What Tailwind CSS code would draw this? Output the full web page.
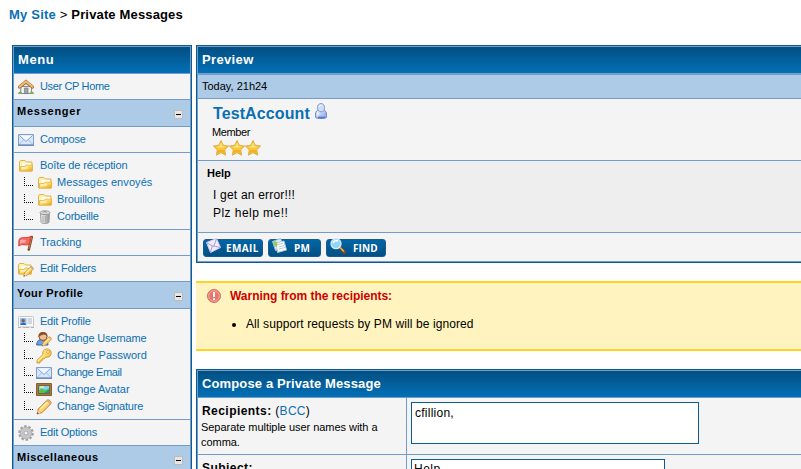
<!DOCTYPE html>
<html lang="en">
<head>
<meta charset="utf-8">
<title>Private Messages</title>
<script src="https://cdn.jsdelivr.net/npm/@tailwindcss/browser@4"></script>
</head>
<body class="h-[469px] w-[801px] overflow-hidden bg-white font-['Liberation_Sans',Arial,sans-serif] text-[11px] text-black">
<svg class="absolute size-0">
  <defs>
    <linearGradient id="gold" x1="0" y1="0" x2="1" y2="1"><stop offset="0" stop-color="#fff3b0"/><stop offset=".5" stop-color="#ffd964"/><stop offset="1" stop-color="#e8a317"/></linearGradient>
    <linearGradient id="grey" x1="0" y1="0" x2="1" y2="0"><stop offset="0" stop-color="#eee"/><stop offset=".5" stop-color="#ccc"/><stop offset="1" stop-color="#8c8c8c"/></linearGradient>
    <linearGradient id="bluey" x1="0" y1="0" x2="1" y2="1"><stop offset="0" stop-color="#f4f8ff"/><stop offset="1" stop-color="#7f9fe8"/></linearGradient>
  </defs>
  <symbol id="home" viewBox="0 0 16 16">
    <path d="M3 7.500h10.500V14.500H2.500z" fill="#f3f1ed" stroke="#8b8b8b"/><path d="M6.500 9h3.500v5.500H6.500z" fill="#9aa5b0" stroke="#6a737c" stroke-width=".6"/>
    <path d="M1.500 8 8 2.800l6.500 5.200" fill="none" stroke="#a86f35" stroke-width="3.400" stroke-linecap="round"/><path d="M1.500 7.700 8 2.500 14.500 7.700" fill="none" stroke="#eebd7c" stroke-width="2" stroke-linecap="round"/>
    <path d="M0 15c0-1.500 1-2.500 2.300-2.500S4.500 13.500 4.500 15zM11.500 15c0-1.500 1-2.500 2.300-2.500S16 13.500 16 15z" fill="#7fae68"/>
  </symbol>
  <symbol id="mail" viewBox="0 0 16 12">
    <path d="M.5.500h15v10.500H.5z" fill="#d8e7fa" stroke="#7d9dd6"/><path d="M1.500 10 6 5.500M14.500 10 10 5.500" stroke="#a4bfe8" fill="none"/><path d="m1.500 1.500 6.500 6 6.500-6" fill="#f3f8ff" stroke="#7ba0db"/><path d="M0 11.200h16" stroke="#5071ab"/>
  </symbol>
  <symbol id="folder" viewBox="0 0 14 12">
    <path d="M.5 11V2l1-1.500H6L7.500 2h5.500v9z" fill="#fff0b4" stroke="#e0b24a"/><path d="M3 3h9v4H3z" fill="#fffbea"/><path d="M1.500 11V6.500h4L7.500 5H13.500v6z" fill="url(#gold)" stroke="#e2b247" stroke-width=".8"/><path d="M4 4h3M9 4h3M3 8h6" stroke="#fff" stroke-width=".9"/>
  </symbol>
  <symbol id="trash" viewBox="0 0 12 14">
    <path d="M1.500 3.500h9l-.5 8.500c0 2-8 2-8 0z" fill="url(#grey)" stroke="#a1a1a1"/><ellipse cx="6" cy="2.700" rx="5" ry="1.900" fill="#ddd" stroke="#999"/><path d="M4.500 2.300c.8-.8 2.200-.8 3 0" fill="none" stroke="#888"/><path d="M4 6v6M6.500 6v6M9 6v5" stroke="#a2a2a2" stroke-width=".8"/>
  </symbol>
  <symbol id="flag" viewBox="0 0 16 16">
    <path d="m13.800 2-3 12.500" stroke="#704622" stroke-width="2.500" stroke-linecap="round"/><path d="m13.700 2-2.900 12" stroke="#c48b53"/><path d="M1 4.500C4 1 7 4 13 1.500L11 9.500C7 11 5 8 .8 11z" fill="#f36860" stroke="#dd3d3d"/><path d="M2 5.500c2-2 4 0 6-.5L7 8C5 7.500 4 7.500 2 9z" fill="#ffa9a2"/>
  </symbol>
  <symbol id="pencil" viewBox="0 0 16 16">
    <path d="m1 15 1.300-5L11 1.300c1.600-1.600 5.200 1.700 3.700 3.600L6 13.600z" fill="#ffd36c" stroke="#b97a30" stroke-linejoin="round"/><path d="M4 10.500 11.500 3" stroke="#fff2ba" stroke-width="1.500"/><path d="m11 1.500 3.500 3.300" stroke="#e0a58f" stroke-width="1.500"/><path d="m1.500 11.500 3 2.700L1 15z" fill="#f3e2c6"/><path d="m1 15 .6-2 1.400 1.400z" fill="#4d3a2b"/>
  </symbol>
  <symbol id="folderpen" viewBox="0 0 16 14"><use href="#folder" x="0" y="0" width="14" height="12"/><use href="#pencil" x="5" y="3" width="11" height="11"/></symbol>
  <symbol id="card" viewBox="0 0 16 12">
    <rect x=".5" y=".5" width="15" height="10.500" rx=".8" fill="#f8f9fb" stroke="#c3c8cf"/><path d="M2 2h6.500v7H2z" fill="#8dbcf0"/><circle cx="5.200" cy="4.600" r="1.700" fill="#8f5b3c"/><path d="M2.500 9c0-3.500 5.500-3.500 5.500 0z" fill="#2f6bb8"/><path d="M9.500 3h4.500M9.500 5h4.500M9.500 7h4.500" stroke="#a3aebb" stroke-width=".9"/><path d="M0 11.500h3M5 11.500h6M13 11.500h3" stroke="#b5b5b5"/>
  </symbol>
  <symbol id="userpen" viewBox="0 0 16 16">
    <path d="M.7 14c0-4 2-5.500 5.300-5.500s6 1.500 6 5.500z" fill="#6ba1dc" stroke="#37649b"/><circle cx="7" cy="5.500" r="4" fill="#f2bd8c" stroke="#895126"/><path d="M2.500 6C1.500-.7 12.500-.7 11.500 6 10.500 4 9 3.800 7.500 3.500 6 4.500 4 4.500 2.500 6z" fill="#85502b"/><use href="#pencil" x="5.500" y="5" width="10.500" height="11"/>
  </symbol>
  <symbol id="key" viewBox="0 0 16 16">
    <path d="M7 6.500C5.500 2 11-.5 13.800 1.800 17 5 14.500 10 9.700 9.200L8 11H6v2H4v2H1v-2.600z" fill="url(#gold)" stroke="#d39c2b"/><circle cx="12" cy="4" r="1.400" fill="#fff" stroke="#cd9430" stroke-width=".8"/><path d="m2 12.800 6-6" stroke="#fff5c1"/>
  </symbol>
  <symbol id="picture" viewBox="0 0 16 13">
    <path d="M.5.500h15v12H.5z" fill="#a9783c" stroke="#86602e"/><path d="M2.500 2.500h11v8h-11z" fill="#7fd2f5" stroke="#74521f" stroke-width=".8"/><path d="M3 7 5.500 5.500 9 7l4-1.500V10H3z" fill="#53c24a"/><path d="m8 10 5-3.500V10z" fill="#1f8f9b"/><path d="M4 4h4" stroke="#f3f58b" stroke-width="1.500"/>
  </symbol>
  <symbol id="gear" viewBox="0 0 16 16">
    <circle cx="8" cy="8" r="6.600" fill="none" stroke="#a0a0a0" stroke-width="2.400" stroke-dasharray="2.500 1.650"/><circle cx="8" cy="8" r="4.200" fill="none" stroke="#c6c6c6" stroke-width="3.600"/><circle cx="8" cy="8" r="5.800" fill="none" stroke="#a2a2a2" stroke-width=".6"/><circle cx="8" cy="8" r="2" fill="#f5f5f5" stroke="#929292" stroke-width=".8"/>
  </symbol>
  <symbol id="star" viewBox="0 0 16 16">
    <path d="m8 .5 2.300 4.800 5.300.7-3.900 3.800 1 5.400L8 12.700l-4.700 2.500 1-5.400L.4 6l5.300-.7z" fill="#f8c732" stroke="#dba945" stroke-width=".9" stroke-linejoin="round"/><path d="M8 2.500 9.500 6l3.500.7-5 1.300-5-1.300L6.500 6z" fill="#fde07c"/><path d="m4 14 4-2.500 4 2.500-.6-3.300L8 9.800l-3.400.9z" fill="#eeb023"/>
  </symbol>
  <symbol id="buddy" viewBox="0 0 12 16">
    <path d="M.7 14.500C0 9 1.500 7.500 3.500 7h5c2 .5 3.500 2 2.800 7.500-1 1.300-9.600 1.300-10.600 0z" fill="url(#bluey)" stroke="#5f80cc"/><path d="M2.500 4.300C2.500-.7 9.500-.7 9.500 4.300S8 8.700 6 8.700 2.500 7.500 2.500 4.300z" fill="#cfdef9" stroke="#8099cf"/><path d="M3 9.500v3M4.500 4c0-1.500 1-2 2-1.500" stroke="#fff" fill="none"/><path d="M10 14.300H3" stroke="#3f66d8"/>
  </symbol>
  <symbol id="toggle" viewBox="0 0 9 9"><path d="M.5.500h8v8h-8z" fill="#e8e6e2" stroke="#bbb"/><path d="M2 4.500h5" stroke="#000"/></symbol>
  <symbol id="branch" viewBox="0 0 9 9"><path d="M.5 0v9" stroke="#000" stroke-dasharray="1 1"/><path d="M2 8.500h7" stroke="#000" stroke-dasharray="1 1"/></symbol>
</svg>

<nav class="flex h-[45px] items-start pt-[7px] pl-[9px] text-[13px] leading-[15px] font-bold whitespace-pre"><a class="tracking-[0.2px] text-[#0b6fb3]">My Site</a><span class="font-normal tracking-[0.2px]"> &gt; </span><span class="tracking-[0.15px]">Private Messages</span></nav>

<div class="flex items-start gap-1 pl-3">
  <aside class="w-[180px] shrink-0 border border-[#0b5c91] text-[#0b6fb3]">
    <div class="h-[430px] border border-[#739ccc] bg-[#f4f4f4]">
      <h2 class="h-[27px] border-b border-[#739ccc] bg-linear-to-b from-[#034f82] to-[#0270b7] pt-[5px] pl-1 text-[13px] leading-[15px] font-bold tracking-[0.6px] text-white">Menu</h2>
      <div class="flex h-[26px] items-center gap-[6px] border-b border-[#739ccc] pl-1"><svg class="size-4"><use href="#home"/></svg><a class="tracking-[-0.35px]">User CP Home</a></div>
      <div class="flex h-[27px] justify-between border-b border-[#739ccc] bg-[#adcae7] pt-[5px] pr-[7px] pl-[3px] font-bold text-black"><span class="leading-[13px] tracking-[0.75px]">Messenger</span><svg class="mt-[5px] size-[9px]"><use href="#toggle"/></svg></div>
      <div class="flex h-[26px] items-center gap-[6px] border-b border-[#739ccc] pl-1"><svg class="h-3 w-4"><use href="#mail"/></svg><a class="tracking-[-0.2px]">Compose</a></div>
      <div class="h-[77px] border-b border-[#739ccc] pt-1 leading-[17px]">
        <div class="flex h-[17px] items-center gap-[7px] pl-[5px]"><svg class="h-3 w-[14px]"><use href="#folder"/></svg><a class="tracking-[-0.1px]">Boîte de réception</a></div>
        <div class="flex h-[17px] items-center pl-[10px]"><svg class="mr-[5px] mb-[3px] size-[9px]"><use href="#branch"/></svg><svg class="mr-[5px] h-3 w-[14px]"><use href="#folder"/></svg><a class="tracking-[0.08px]">Messages envoyés</a></div>
        <div class="flex h-[17px] items-center pl-[10px]"><svg class="mr-[5px] mb-[3px] size-[9px]"><use href="#branch"/></svg><svg class="mr-[5px] h-3 w-[14px]"><use href="#folder"/></svg><a class="tracking-[-0.1px]">Brouillons</a></div>
        <div class="flex h-[17px] items-center pl-[10px]"><svg class="mr-[6px] mb-[3px] size-[9px]"><use href="#branch"/></svg><svg class="mr-[6px] h-[14px] w-3"><use href="#trash"/></svg><a class="tracking-[-0.2px]">Corbeille</a></div>
      </div>
      <div class="flex h-[26px] items-center gap-[6px] border-b border-[#739ccc] pl-1"><svg class="size-4"><use href="#flag"/></svg><a class="tracking-[-0.05px]">Tracking</a></div>
      <div class="flex h-[26px] items-center gap-[6px] border-b border-[#739ccc] pl-1"><svg class="mt-[2px] h-[14px] w-4"><use href="#folderpen"/></svg><a class="tracking-[-0.22px]">Edit Folders</a></div>
      <div class="flex h-[27px] justify-between border-b border-[#739ccc] bg-[#adcae7] pt-[5px] pr-[7px] pl-[3px] font-bold text-black"><span class="leading-[13px] tracking-[0.4px]">Your Profile</span><svg class="mt-[5px] size-[9px]"><use href="#toggle"/></svg></div>
      <div class="h-[111px] border-b border-[#739ccc] pt-1">
        <div class="flex h-[17px] items-center gap-[6px] pl-1"><svg class="h-3 w-4"><use href="#card"/></svg><a class="tracking-[-0.22px]">Edit Profile</a></div>
        <div class="flex h-[17px] items-center pl-[10px]"><svg class="mr-[3px] mb-[3px] size-[9px]"><use href="#branch"/></svg><svg class="mr-[5px] size-4"><use href="#userpen"/></svg><a class="tracking-[-0.2px]">Change Username</a></div>
        <div class="flex h-[17px] items-center pl-[10px]"><svg class="mr-[3px] mb-[3px] size-[9px]"><use href="#branch"/></svg><svg class="mr-[5px] size-4"><use href="#key"/></svg><a>Change Password</a></div>
        <div class="flex h-[17px] items-center pl-[10px]"><svg class="mr-[3px] mb-[3px] size-[9px]"><use href="#branch"/></svg><svg class="mr-[5px] h-3 w-4"><use href="#mail"/></svg><a class="tracking-[-0.38px]">Change Email</a></div>
        <div class="flex h-[17px] items-center pl-[10px]"><svg class="mr-[3px] mb-[3px] size-[9px]"><use href="#branch"/></svg><svg class="mr-[5px] h-[13px] w-4"><use href="#picture"/></svg><a>Change Avatar</a></div>
        <div class="flex h-[17px] items-center pl-[10px]"><svg class="mr-[3px] mb-[3px] size-[9px]"><use href="#branch"/></svg><svg class="mr-[5px] size-4"><use href="#pencil"/></svg><a class="tracking-[-0.15px]">Change Signature</a></div>
      </div>
      <div class="flex h-[26px] items-center gap-[6px] border-b border-[#739ccc] pl-1"><svg class="size-4"><use href="#gear"/></svg><a class="tracking-[-0.25px]">Edit Options</a></div>
      <div class="flex h-[27px] justify-between border-b border-[#739ccc] bg-[#adcae7] pt-[5px] pr-[7px] pl-[3px] font-bold text-black"><span class="leading-[13px] tracking-[0.5px]">Miscellaneous</span><svg class="mt-[5px] size-[9px]"><use href="#toggle"/></svg></div>
    </div>
  </aside>

  <main class="w-[640px] shrink-0">
    <section class="border border-[#0b5c91]">
      <div class="h-[216px] border border-[#739ccc] bg-[#f4f4f4]">
        <h2 class="h-[28px] border-b-2 border-[#739ccc] bg-linear-to-b from-[#034f82] to-[#0270b7] pt-[5px] pl-1 text-[13px] leading-[15px] font-bold tracking-[0.35px] text-white">Preview</h2>
        <div class="h-6 border-b border-[#739ccc] bg-[#adcae7] pt-[5px] pl-[4px] leading-[13px]">Today, 21h24</div>
        <div class="h-[62px] border-b border-[#739ccc] pt-1 pl-[14px]">
          <div class="flex h-[23px] gap-[5px] pl-px"><a class="pt-[2px] text-[16px] leading-[18px] font-bold tracking-[0.1px] text-[#0b6fb3]">TestAccount</a><svg class="h-4 w-3"><use href="#buddy"/></svg></div>
          <div class="h-[14px] leading-[13px] tracking-[-0.4px]">Member</div>
          <div class="flex pl-px"><svg class="size-4"><use href="#star"/></svg><svg class="size-4"><use href="#star"/></svg><svg class="size-4"><use href="#star"/></svg></div>
        </div>
        <div class="h-[72px] border-b border-[#739ccc] bg-[#eee] pt-[6px] pl-[9px]">
          <h3 class="leading-[13px] font-bold">Help</h3>
          <p class="pt-[6px] pl-[6px] text-[12px] leading-[18px]"><span class="tracking-[0.2px]">I get an error!!!</span><br><span class="tracking-[0.45px]">Plz help me!!</span></p>
        </div>
        <div class="flex gap-[5px] pt-[6px] pl-[5px] font-['Open_Sans',sans-serif] text-[10px] leading-[18px] font-bold text-white">
          <a class="flex h-[18px] w-[60px] rounded-[3px] border border-[#1c5a8c] bg-linear-to-b from-[#0166a7] to-[#024f83]"><svg class="-mt-[2px] ml-[2px] h-4 w-[15px] shrink-0" viewBox="0 0 15 16"><path d="m.5 4.500 10-4 4 9-10 5z" fill="#f1edff" stroke="#d1caec"/><path d="m1 5 6.500 3.500L10.500 1M4.500 14l1.800-6M14 9.500 8 8" fill="none" stroke="#a49dc8"/></svg><span class="-mt-px ml-[5px] tracking-[0.35px]">EMAIL</span></a>
          <a class="flex h-[18px] w-[53px] rounded-[3px] border border-[#1c5a8c] bg-linear-to-b from-[#0166a7] to-[#024f83]"><svg class="-mt-[2px] ml-[3px] h-4 w-[15px] shrink-0" viewBox="0 0 15 16"><path d="m.5 3.500 8-3 4 9-9 3z" fill="#dceefc" stroke="#97bdde"/><path d="m4 5 8-2 2.500 9-9 2.500z" fill="#fff" stroke="#abc7d8"/><path d="m6 6.500 5-1.300M6.500 9l6-1.500M7 11l6-1.500" stroke="#bccbd6"/><path d="m1 4 3-1 2 4-3 2z" fill="#94c95b"/></svg><span class="-mt-px ml-[7px] tracking-[0.2px]">PM</span></a>
          <a class="flex h-[18px] w-[60px] rounded-[3px] border border-[#1c5a8c] bg-linear-to-b from-[#0166a7] to-[#024f83]"><svg class="-mt-[2px] ml-[3px] h-4 w-4 shrink-0" viewBox="0 0 16 16"><path d="m9.500 9 5 5.500" stroke="#884817" stroke-width="3" stroke-linecap="round"/><path d="m10 9.500 4 4" stroke="#f3af4a" stroke-width="1.600"/><circle cx="6" cy="5.700" r="5" fill="#91d4fa" stroke="#d3edfb" stroke-width="1.300"/><path d="M3 5c1-2 3-3 5-2" stroke="#fff" stroke-width="1.600" fill="none"/></svg><span class="-mt-px ml-[7px] tracking-[0.1px]">FIND</span></a>
        </div>
      </div>
    </section>

    <section class="mt-[18px] h-[70px] border-y-2 border-[#ffd324] bg-[#fff4bf] pt-[6px] pl-[11px] text-[12px]">
      <div class="flex h-[14px] gap-[9px]"><svg class="size-[14px]" viewBox="0 0 14 14"><circle cx="7" cy="7" r="6.500" fill="#e7766c" stroke="#de6a60"/><circle cx="7" cy="7" r="5.300" fill="none" stroke="#f5aca2"/><path d="M7 3v5" stroke="#fff" stroke-width="2"/><path d="M7 9.200v1.800" stroke="#fff" stroke-width="2"/></svg><strong class="leading-[14px] tracking-[-0.03px] text-[#c00]">Warning from the recipients:</strong></div>
      <ul class="mt-[14px] list-disc pl-[39px] leading-[14px] tracking-[0.1px]"><li>All support requests by PM will be ignored</li></ul>
    </section>

    <section class="mt-[18px] border border-[#0b5c91]">
      <div class="h-[110px] border border-[#739ccc] bg-[#f4f4f4]">
        <h2 class="h-[27px] border-b border-[#739ccc] bg-linear-to-b from-[#034f82] to-[#0270b7] pt-[5px] pl-1 text-[13px] leading-[15px] font-bold tracking-[0.13px] text-white">Compose a Private Message</h2>
        <div class="flex h-[57px] border-b border-[#739ccc]">
          <div class="w-[209px] border-r border-[#739ccc] pt-[6px] pl-1 leading-[15px]"><div class="text-[12px] leading-[15px] tracking-[0.3px]"><b class="tracking-[0.45px]">Recipients:</b> (<a class="text-[#0b6fb3]">BCC</a>)</div><div class="-ml-px w-[190px] pt-px tracking-[-0.04px]">Separate multiple user names with a comma.</div></div>
          <div class="pt-1 pl-1"><div class="h-[42px] w-[288px] border border-[#0b5c91] bg-white pt-[3px] pl-[3px] text-[12px] leading-[14px] tracking-[0.25px]">cfillion,</div></div>
        </div>
        <div class="flex h-[57px]">
          <div class="w-[209px] border-r border-[#739ccc] pt-[6px] pl-1 text-[12px] leading-[15px] font-bold tracking-[0.45px]">Subject:</div>
          <div class="pt-1 pl-1"><div class="h-[22px] w-[254px] border border-[#0b5c91] bg-white pt-[2px] pl-[2px] text-[12px] leading-[14px] tracking-[0.5px]">Help</div></div>
        </div>
      </div>
    </section>
  </main>
</div>
</body>
</html>
